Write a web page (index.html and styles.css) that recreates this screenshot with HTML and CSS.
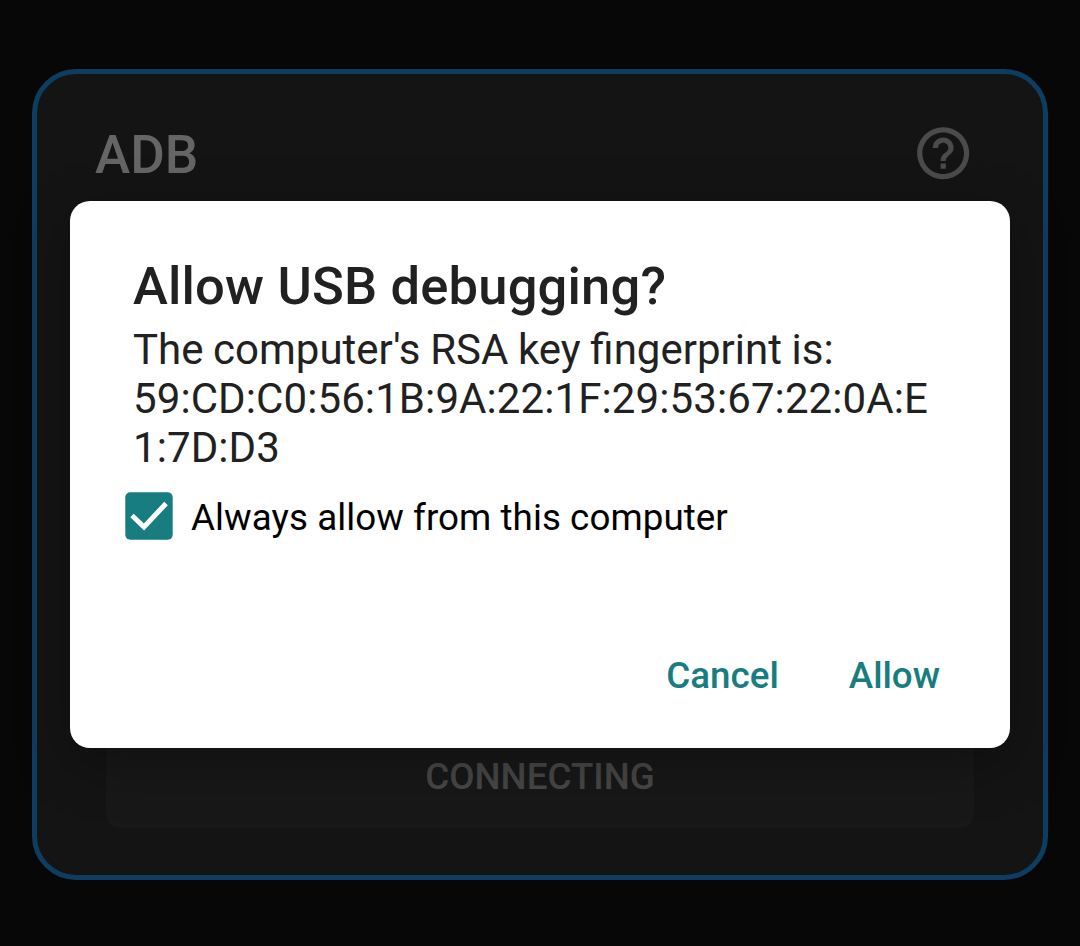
FILE: index.html
```html
<!DOCTYPE html>
<html lang="en">
<head>
<meta charset="utf-8">
<title>ADB</title>
<link rel="stylesheet" href="styles.css">
</head>
<body>
<main class="screen">
  <section class="card">
    <header class="card-header">
      <h1 class="card-title">ADB</h1>
      <svg class="help-icon" viewBox="0 0 24 24" aria-label="Help"><path d="M11 18h2v-2h-2v2zm1-16C6.480 2 2 6.480 2 12s4.480 10 10 10 10-4.480 10-10S17.520 2 12 2zm0 18c-4.410 0-8-3.590-8-8s3.590-8 8-8 8 3.590 8 8-3.590 8-8 8zm0-14c-2.210 0-4 1.790-4 4h2c0-1.100.9-2 2-2s2 .9 2 2c0 2-3 1.750-3 5h2c0-2.250 3-2.500 3-5 0-2.210-1.790-4-4-4z"/></svg>
    </header>
    <div class="connect-button">CONNECTING</div>
  </section>
</main>
<div class="dialog" role="dialog">
  <h2 class="dialog-title">Allow USB debugging?</h2>
  <p class="dialog-message">The computer's RSA key fingerprint is:<br><span class="fingerprint">59:CD:C0:56:1B:9A:22:1F:29:53:67:22:0A:E<br>1:7D:D3</span></p>
  <div class="always">
    <svg class="checkbox" viewBox="0 0 48 48"><rect x=".3" y=".3" width="47.400" height="47.400" rx="5"/><path d="M7 23.500L19 35L41 11.500"/></svg>
    <span>Always allow from this computer</span>
  </div>
  <div class="actions">
    <span class="action">Cancel</span>
    <span class="action">Allow</span>
  </div>
</div>
</body>
</html>
```

FILE: styles.css
```css
* { box-sizing: border-box; }
body {
  margin: 0;
  width: 1080px;
  height: 946px;
  overflow: hidden;
  background: #070707;
  font-family: Roboto, "Liberation Sans", sans-serif;
}
h1, h2, p { margin: 0; font-weight: 500; }
.screen { height: 946px; padding: 69px 32px 66px; }
.card {
  display: flex;
  flex-direction: column;
  justify-content: space-between;
  height: 811px;
  padding: 49px 69px 47px 58px;
  border: 5px solid #0d3d61;
  border-radius: 44px;
  background: #141414;
}
.card-header {
  display: flex;
  justify-content: space-between;
  align-items: flex-start;
}
.card-title { padding-top: 1px; color: #656565; font-size: 53px; line-height: 62px; }
.help-icon { width: 62.4px; height: 62.4px; margin-top: -1px; fill: #4b4b4b; }
.connect-button {
  display: flex;
  align-items: flex-end;
  justify-content: center;
  height: 126px;
  margin: 0 0 0 11px;
  padding-bottom: 30px;
  border-radius: 14px;
  background: #181818;
  color: #484848;
  font-size: 36.75px;
  font-weight: 500;
  line-height: 43px;
}
.dialog {
  position: absolute;
  left: 70px;
  top: 201px;
  width: 940px;
  height: 547px;
  padding: 54px 64px 0 63px;
  border-radius: 20px;
  background: #fff;
  color: #212121;
  box-shadow: 0 16px 56px rgba(0, 0, 0, .3);
}
.dialog-title { font-size: 52.5px; line-height: 62px; letter-spacing: .18px; }
.dialog-message {
  margin-top: 8px;
  font-size: 42px;
  font-weight: 400;
  line-height: 49px;
  white-space: nowrap;
  word-spacing: -.8px;
}
.fingerprint { letter-spacing: .1px; }
.always {
  display: flex;
  align-items: center;
  gap: 18px;
  height: 48px;
  margin: 20px 0 0 -8px;
  color: #000;
  font-size: 36.75px;
  line-height: 43px;
  letter-spacing: .06px;
}
.always span { padding-top: 3px; }
.checkbox { width: 48px; height: 48px; fill: #177d80; }
.checkbox path { fill: none; stroke: #fff; stroke-width: 5; }
.actions {
  display: flex;
  justify-content: flex-end;
  gap: 70px;
  margin: 114px 6px 0 0;
  color: #177d80;
  font-size: 36.75px;
  font-weight: 500;
  line-height: 43px;
}
```
